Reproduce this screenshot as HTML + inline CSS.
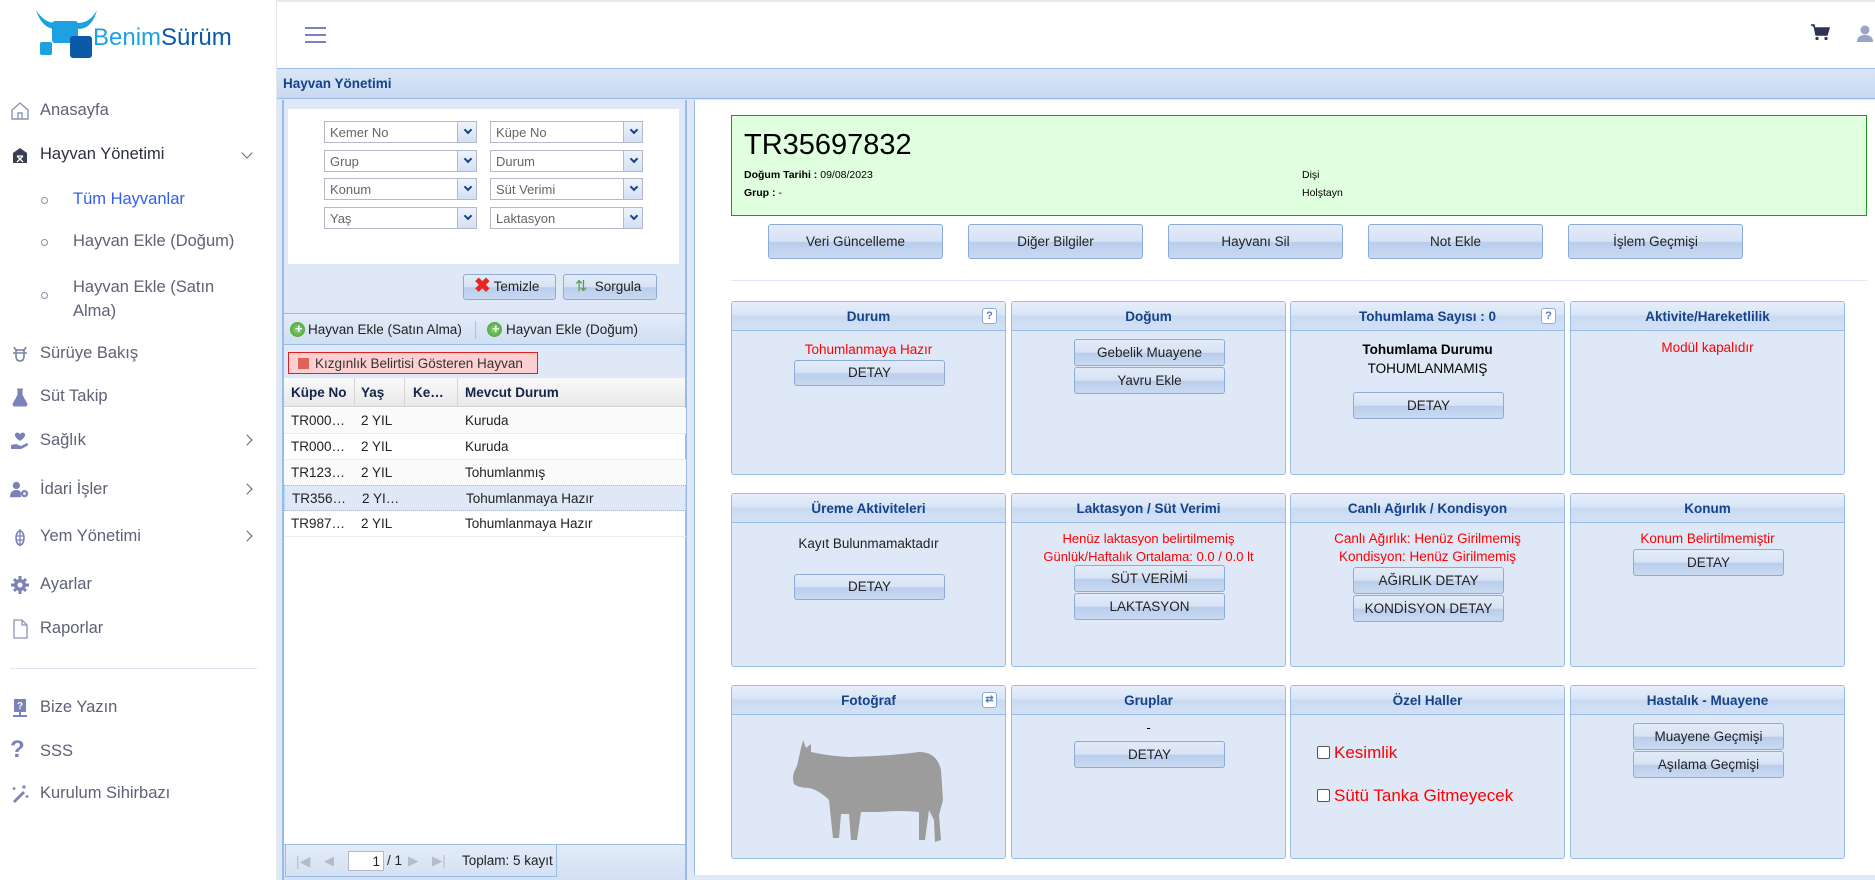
<!DOCTYPE html>
<html><head><meta charset="utf-8">
<style>
*{box-sizing:border-box;margin:0;padding:0}
body{width:1875px;height:880px;overflow:hidden;background:#fff;font-family:"Liberation Sans",Arial,sans-serif;position:relative;font-size:13px;color:#000}
.a{position:absolute}
#side{left:0;top:0;width:277px;height:880px;background:#fff;border-right:1px solid #e4e7ee}
.mi{position:absolute;left:40px;font-size:16.5px;color:#5d6276;white-space:nowrap}
.ic{position:absolute;left:10px;width:20px;height:20px}
.sub{position:absolute;left:73px;font-size:16.5px;color:#5d6276}
.bul{position:absolute;left:41px;width:7px;height:7px;border:1px solid #8a8fa8;border-radius:50%}
.chev{position:absolute;left:243px;width:8px;height:8px;border-right:1.6px solid #5d6276;border-bottom:1.6px solid #5d6276;transform:rotate(-45deg)}
.sel{position:absolute;height:22px;width:153px;border:1px solid #b5b8c8;background:#fff;font-size:13px;color:#666;padding:3px 5px}
.sel:after{content:"";position:absolute;right:0;top:0;width:18px;height:20px;background:linear-gradient(#eef3fb,#d3e0f3);border-left:1px solid #b5b8c8}
.sel i{position:absolute;right:5px;top:5px;width:6px;height:6px;border-right:2px solid #15428b;border-bottom:2px solid #15428b;transform:rotate(45deg);z-index:2}
.btn{position:absolute;border:1px solid #8eaad8;border-radius:3px;background:linear-gradient(#e3ebf8 0%,#d6e2f5 50%,#b9cdec 52%,#c9d9f1 100%);text-align:center;font-size:13.5px;color:#222;white-space:nowrap}
.card{position:absolute;width:275px;height:174px;border:1px solid #99bbe8;border-radius:3px;background:#dfe8f6}
.ch{height:29px;border-bottom:1px solid #99bbe8;background:linear-gradient(#e6eefa 0%,#d9e5f6 45%,#c8daf2 50%,#d3e1f5 100%);text-align:center;font-weight:bold;font-size:13.5px;color:#15428b;line-height:29px}
.q{position:absolute;right:8px;top:6px;width:15px;height:16px;border:1px solid #8eaad8;border-radius:3px;background:#fff;color:#5b7fb9;font-size:11px;line-height:14px;text-align:center;font-weight:bold}
.red{color:#ff0000;font-size:13.5px;text-align:center;position:absolute;left:0;right:0}
.row{position:absolute;left:0;width:402px;height:26px;font-size:13.5px;color:#222;border-bottom:1px solid #ededed}
.row span{position:absolute;top:5px}
</style></head><body>
<div id="side" class="a">
 <svg class="a" style="left:34px;top:7px" width="200" height="55" viewBox="0 0 200 55">
  <path d="M2 3 Q10 16 22 16 L44 16 Q56 16 63 3 Q58 22 44 22 L22 22 Q8 22 2 3Z" fill="#1ea1e0"/>
  <rect x="18" y="14" width="26" height="22" rx="3" fill="#1ea1e0"/>
  <rect x="6" y="35" width="12" height="13" rx="2" fill="#1ea1e0"/>
  <rect x="36" y="29" width="22" height="22" rx="3" fill="#0b5aa8"/>
  <text x="59" y="38" font-family="Liberation Sans,sans-serif" font-size="24" fill="#1ea1e0">Benim<tspan fill="#0b5aa8">Sürüm</tspan></text>
 </svg>
 <svg class="ic" style="top:101px" viewBox="0 0 20 20"><path d="M2 9 L10 2 L18 9 V18 H2Z M8 18 V12 H12 V18" fill="none" stroke="#8a93b8" stroke-width="1.4"/></svg>
 <div class="mi" style="top:101px">Anasayfa</div>
 <svg class="ic" style="top:145px" viewBox="0 0 20 20"><path d="M3 8 L10 3 L17 8 V18 H3Z" fill="#3a3f55"/><path d="M7 11 H13 M7 11 L13 17 M13 11 L7 17" stroke="#fff" stroke-width="1.3"/></svg>
 <div class="mi" style="top:145px;color:#2b2f40">Hayvan Yönetimi</div>
 <div class="chev" style="top:149px;transform:rotate(45deg)"></div>
 <div class="bul" style="top:197px"></div><div class="sub" style="top:190px;color:#2f5ef0">Tüm Hayvanlar</div>
 <div class="bul" style="top:239px"></div><div class="sub" style="top:232px">Hayvan Ekle (Doğum)</div>
 <div class="bul" style="top:292px"></div><div class="sub" style="top:275px;line-height:24px">Hayvan Ekle (Satın<br>Alma)</div>
 <svg class="ic" style="top:344px" viewBox="0 0 20 20"><path d="M4 3 Q6 7 8 6 M16 3 Q14 7 12 6 M6 6 H14 V12 Q14 17 10 17 Q6 17 6 12Z M3 9 H17" fill="none" stroke="#7a82a8" stroke-width="1.6"/></svg>
 <div class="mi" style="top:344px">Sürüye Bakış</div>
 <svg class="ic" style="top:387px" viewBox="0 0 20 20"><path d="M7 2 H13 M8 2 V8 L3 17 Q3 19 5 19 H15 Q17 19 17 17 L12 8 V2" fill="#7a82b8" stroke="#7a82b8"/></svg>
 <div class="mi" style="top:387px">Süt Takip</div>
 <svg class="ic" style="top:431px" viewBox="0 0 20 20"><path d="M10 3 Q13 0 15 3 Q16 6 10 10 Q4 6 5 3 Q7 0 10 3Z M1 14 L6 13 L11 15 L17 12 Q19 13 17 15 L11 18 H1Z" fill="#7a82b8"/></svg>
 <div class="mi" style="top:431px">Sağlık</div><div class="chev" style="top:436px"></div>
 <svg class="ic" style="top:480px" viewBox="0 0 22 20"><circle cx="7" cy="5" r="4" fill="#7a82b8"/><path d="M0 18 Q0 10 7 10 Q11 10 12 13 V18Z" fill="#7a82b8"/><circle cx="16" cy="14" r="4" fill="#7a82b8"/><circle cx="16" cy="14" r="1.5" fill="#fff"/></svg>
 <div class="mi" style="top:480px">İdari İşler</div><div class="chev" style="top:485px"></div>
 <svg class="ic" style="top:527px" viewBox="0 0 20 20"><ellipse cx="10" cy="11" rx="4" ry="7" fill="none" stroke="#7a82b8" stroke-width="1.6"/><path d="M10 2 V19 M6 9 H14 M6 13 H14" stroke="#7a82b8" stroke-width="1.3"/></svg>
 <div class="mi" style="top:527px">Yem Yönetimi</div><div class="chev" style="top:532px"></div>
 <svg class="ic" style="top:575px" viewBox="0 0 20 20"><circle cx="10" cy="10" r="6" fill="#7a82b8"/><path d="M10 1 V19 M1 10 H19 M4 4 L16 16 M16 4 L4 16" stroke="#7a82b8" stroke-width="3"/><circle cx="10" cy="10" r="2.5" fill="#fff"/></svg>
 <div class="mi" style="top:575px">Ayarlar</div>
 <svg class="ic" style="top:619px" viewBox="0 0 20 20"><path d="M4 1 H12 L17 6 V19 H4Z M12 1 V6 H17" fill="none" stroke="#8a93b8" stroke-width="1.3"/></svg>
 <div class="mi" style="top:619px">Raporlar</div>
 <div class="a" style="left:10px;top:668px;width:247px;height:1px;background:#e2e5ef"></div>
 <svg class="ic" style="top:698px" viewBox="0 0 20 20"><rect x="4" y="1" width="12" height="13" fill="#7a82b8"/><path d="M10 14 V18 M3 18 H17" stroke="#7a82b8" stroke-width="2"/><text x="10" y="11" font-size="10" fill="#fff" text-anchor="middle" font-weight="bold">?</text></svg>
 <div class="mi" style="top:698px">Bize Yazın</div>
 <div class="a" style="left:10px;top:736px;font-size:24px;font-weight:bold;color:#7a82b8">?</div>
 <div class="mi" style="top:742px">SSS</div>
 <svg class="ic" style="top:784px" viewBox="0 0 20 20"><path d="M3 17 L13 7 L15 9 L5 19Z" fill="#7a82b8"/><path d="M14 1 V5 M12 3 H16 M4 3 V6 M2.5 4.5 H5.5 M17 11 V14 M15.5 12.5 H18.5" stroke="#7a82b8" stroke-width="1.3"/></svg>
 <div class="mi" style="top:784px">Kurulum Sihirbazı</div>
</div>
<!-- top bar -->
<div class="a" style="left:277px;top:0;width:1598px;height:2px;background:#e8e8e8"></div>
<div class="a" style="left:305px;top:27px;width:21px;height:2px;background:#7a82b8;box-shadow:0 7px 0 #7a82b8,0 14px 0 #7a82b8"></div>
<svg class="a" style="left:1811px;top:24px" width="19" height="17" viewBox="0 0 19 17"><path d="M0 1 H3 L5 11 H16 L18 4 H4" fill="#2c3553" stroke="#2c3553" stroke-width="1.5"/><circle cx="6" cy="14.5" r="1.6" fill="#2c3553"/><circle cx="15" cy="14.5" r="1.6" fill="#2c3553"/></svg>
<svg class="a" style="left:1857px;top:25px" width="16" height="17" viewBox="0 0 16 17"><circle cx="8" cy="5" r="4.5" fill="#9aa3c8"/><path d="M0 17 Q0 10 8 10 Q16 10 16 17Z" fill="#9aa3c8"/></svg>
<!-- main header -->
<div class="a" style="left:277px;top:68px;width:1598px;height:812px;background:#dfe8f6"></div>
<div class="a" style="left:277px;top:68px;width:1598px;height:31px;background:linear-gradient(#dae6f6,#c7d9f1);border-top:1px solid #99bbe8;border-bottom:1px solid #99bbe8;font-weight:bold;font-size:13.5px;color:#15428b;padding:7px 0 0 6px">Hayvan Yönetimi</div>
<!-- left panel -->
<div class="a" style="left:282px;top:100px;width:405px;height:780px;border:1px solid #99bbe8;border-width:0 2px 0 2px;background:#dfe8f6"></div>
<div class="a" style="left:288px;top:109px;width:391px;height:155px;background:#fff"></div>
<div class="sel" style="left:324px;top:121px">Kemer No<i></i></div>
<div class="sel" style="left:490px;top:121px">Küpe No<i></i></div>
<div class="sel" style="left:324px;top:150px">Grup<i></i></div>
<div class="sel" style="left:490px;top:150px">Durum<i></i></div>
<div class="sel" style="left:324px;top:178px">Konum<i></i></div>
<div class="sel" style="left:490px;top:178px">Süt Verimi<i></i></div>
<div class="sel" style="left:324px;top:207px">Yaş<i></i></div>
<div class="sel" style="left:490px;top:207px">Laktasyon<i></i></div>
<div class="btn" style="left:463px;top:274px;width:93px;height:26px;line-height:24px;padding-left:14px"><span style="position:absolute;left:10px;top:-1px;color:#e8261f;font-size:20px;font-weight:bold">✖</span>Temizle</div>
<div class="btn" style="left:563px;top:274px;width:94px;height:26px;line-height:24px;padding-left:16px"><span style="position:absolute;left:11px;top:0;color:#4aa63a;font-size:15px">⇅</span>Sorgula</div>
<div class="a" style="left:284px;top:313px;width:401px;height:32px;background:linear-gradient(#e3ecf8,#d0def2);border-top:1px solid #99bbe8;border-bottom:1px solid #99bbe8;font-size:13.5px;color:#222">
 <span class="a" style="left:6px;top:8px;width:15px;height:15px;border-radius:50%;background:radial-gradient(#8fd37a,#3b9a2d)"></span><span class="a" style="left:11px;top:7px;color:#fff;font-weight:bold;font-size:13px">+</span>
 <span class="a" style="left:24px;top:8px">Hayvan Ekle (Satın Alma)</span>
 <span class="a" style="left:191px;top:7px;width:1px;height:18px;background:#a8bfdf"></span>
 <span class="a" style="left:203px;top:8px;width:15px;height:15px;border-radius:50%;background:radial-gradient(#8fd37a,#3b9a2d)"></span><span class="a" style="left:208px;top:7px;color:#fff;font-weight:bold;font-size:13px">+</span>
 <span class="a" style="left:222px;top:8px">Hayvan Ekle (Doğum)</span>
</div>
<div class="a" style="left:288px;top:352px;width:250px;height:22px;background:#fcd0d0;border:1.5px solid #e02020;font-size:13.5px;color:#333;padding:3px 0 0 26px"><span class="a" style="left:9px;top:5px;width:11px;height:11px;background:#e0605a"></span>Kızgınlık Belirtisi Gösteren Hayvan</div>
<div class="a" style="left:284px;top:378px;width:401px;height:466px;background:#fff">
 <div class="a" style="left:0;top:0;width:401px;height:29px;background:linear-gradient(#f9f9f9,#e9e9e9);border-bottom:1px solid #d0d0d0;font-weight:bold;font-size:13.5px;color:#15224a">
  <span class="a" style="left:7px;top:7px">Küpe No</span><span class="a" style="left:70px;top:0;width:1px;height:29px;background:#d5d5d5"></span>
  <span class="a" style="left:77px;top:7px">Yaş</span><span class="a" style="left:120px;top:0;width:1px;height:29px;background:#d5d5d5"></span>
  <span class="a" style="left:129px;top:7px">Ke…</span><span class="a" style="left:173px;top:0;width:1px;height:29px;background:#d5d5d5"></span>
  <span class="a" style="left:181px;top:7px">Mevcut Durum</span>
 </div>
 <div class="row" style="top:30px;background:#fafafa"><span style="left:7px">TR000…</span><span style="left:77px">2 YIL</span><span style="left:181px">Kuruda</span></div>
 <div class="row" style="top:56px"><span style="left:7px">TR000…</span><span style="left:77px">2 YIL</span><span style="left:181px">Kuruda</span></div>
 <div class="row" style="top:82px;background:#fafafa"><span style="left:7px">TR123…</span><span style="left:77px">2 YIL</span><span style="left:181px">Tohumlanmış</span></div>
 <div class="row" style="top:107px;background:#dfe8f6;border:1px dotted #99bbe8"><span style="left:7px">TR356…</span><span style="left:77px">2 YI…</span><span style="left:181px">Tohumlanmaya Hazır</span></div>
 <div class="row" style="top:133px"><span style="left:7px">TR987…</span><span style="left:77px">2 YIL</span><span style="left:181px">Tohumlanmaya Hazır</span></div>
</div>
<div class="a" style="left:284px;top:844px;width:401px;height:36px;background:linear-gradient(#e3ecf8,#d2e0f3);border-top:1px solid #99bbe8"></div>
<div class="a" style="left:285px;top:844px;width:272px;height:33px;border:1px solid #99bbe8;font-size:13.5px;color:#222">
 <span class="a" style="left:10px;top:8px;color:#b5bcc8;font-size:14px">|◀</span>
 <span class="a" style="left:38px;top:8px;color:#b5bcc8;font-size:13px">◀</span>
 <span class="a" style="left:62px;top:6px;width:36px;height:20px;border:1px solid #b5b8c8;background:#fff;text-align:right;padding:2px 3px 0 0">1</span>
 <span class="a" style="left:101px;top:8px">/ 1</span>
 <span class="a" style="left:122px;top:8px;color:#b5bcc8">▶</span>
 <span class="a" style="left:146px;top:8px;color:#b5bcc8">▶|</span>
 <span class="a" style="left:176px;top:8px">Toplam: 5 kayıt</span>
</div>
<!-- right panel -->
<div class="a" style="left:694px;top:100px;width:1181px;height:775px;background:#fff;border-left:1px solid #99bbe8"></div>
<div class="a" style="left:731px;top:115px;width:1136px;height:101px;background:#dfffdf;border:1.5px solid #1d9a1d">
 <div class="a" style="left:12px;top:13px;font-size:29px;color:#000">TR35697832</div>
 <div class="a" style="left:12px;top:53px;font-size:10.5px"><b>Doğum Tarihi :</b> 09/08/2023</div>
 <div class="a" style="left:12px;top:71px;font-size:10.5px"><b>Grup :</b> -</div>
 <div class="a" style="left:570px;top:53px;font-size:10.5px">Dişi</div>
 <div class="a" style="left:570px;top:71px;font-size:10.5px">Holştayn</div>
</div>
<div class="btn" style="left:768px;top:224px;width:175px;height:35px;line-height:33px">Veri Güncelleme</div>
<div class="btn" style="left:968px;top:224px;width:175px;height:35px;line-height:33px">Diğer Bilgiler</div>
<div class="btn" style="left:1168px;top:224px;width:175px;height:35px;line-height:33px">Hayvanı Sil</div>
<div class="btn" style="left:1368px;top:224px;width:175px;height:35px;line-height:33px">Not Ekle</div>
<div class="btn" style="left:1568px;top:224px;width:175px;height:35px;line-height:33px">İşlem Geçmişi</div>
<div class="a" style="left:731px;top:280px;width:1136px;height:1px;background:#dfe8f6"></div>
<!-- row 1 -->
<div class="card" style="left:731px;top:301px"><div class="ch">Durum</div><div class="q">?</div>
 <div class="red" style="top:40px">Tohumlanmaya Hazır</div>
 <div class="btn" style="left:62px;top:58px;width:151px;height:26px;line-height:24px">DETAY</div></div>
<div class="card" style="left:1011px;top:301px"><div class="ch">Doğum</div>
 <div class="btn" style="left:62px;top:37px;width:151px;height:27px;line-height:25px">Gebelik Muayene</div>
 <div class="btn" style="left:62px;top:65px;width:151px;height:27px;line-height:25px">Yavru Ekle</div></div>
<div class="card" style="left:1290px;top:301px"><div class="ch">Tohumlama Sayısı : 0</div><div class="q">?</div>
 <div class="a" style="left:0;right:0;top:38px;text-align:center;font-size:13.5px;line-height:19px"><b>Tohumlama Durumu</b><br>TOHUMLANMAMIŞ</div>
 <div class="btn" style="left:62px;top:90px;width:151px;height:27px;line-height:25px">DETAY</div></div>
<div class="card" style="left:1570px;top:301px"><div class="ch">Aktivite/Hareketlilik</div>
 <div class="red" style="top:38px">Modül kapalıdır</div></div>
<!-- row 2 -->
<div class="card" style="left:731px;top:493px"><div class="ch">Üreme Aktiviteleri</div>
 <div class="a" style="left:0;right:0;top:42px;text-align:center;font-size:13.5px;color:#222">Kayıt Bulunmamaktadır</div>
 <div class="btn" style="left:62px;top:80px;width:151px;height:26px;line-height:24px">DETAY</div></div>
<div class="card" style="left:1011px;top:493px"><div class="ch">Laktasyon / Süt Verimi</div>
 <div class="red" style="top:36px;line-height:18px;font-size:13px">Henüz laktasyon belirtilmemiş<br>Günlük/Haftalık Ortalama: 0.0 / 0.0 lt</div>
 <div class="btn" style="left:62px;top:71px;width:151px;height:27px;line-height:25px">SÜT VERİMİ</div>
 <div class="btn" style="left:62px;top:99px;width:151px;height:27px;line-height:25px">LAKTASYON</div></div>
<div class="card" style="left:1290px;top:493px"><div class="ch">Canlı Ağırlık / Kondisyon</div>
 <div class="red" style="top:36px;line-height:18px">Canlı Ağırlık: Henüz Girilmemiş<br>Kondisyon: Henüz Girilmemiş</div>
 <div class="btn" style="left:62px;top:73px;width:151px;height:27px;line-height:25px">AĞIRLIK DETAY</div>
 <div class="btn" style="left:62px;top:101px;width:151px;height:27px;line-height:25px">KONDİSYON DETAY</div></div>
<div class="card" style="left:1570px;top:493px"><div class="ch">Konum</div>
 <div class="red" style="top:37px">Konum Belirtilmemiştir</div>
 <div class="btn" style="left:62px;top:55px;width:151px;height:27px;line-height:25px">DETAY</div></div>
<!-- row 3 -->
<div class="card" style="left:731px;top:685px"><div class="ch">Fotoğraf</div><div class="q" style="font-size:10px">⇄</div>
 <svg class="a" style="left:57px;top:54px" width="158" height="110" viewBox="0 0 158 110"><path d="M12 8 L14 0 L17 8 L22 4 L22 12 Q40 16 60 17 Q100 16 130 12 Q148 12 152 30 L154 60 L150 75 L152 100 L146 102 L145 80 L140 70 L136 100 L130 100 L130 72 Q110 70 90 72 L72 72 L68 100 L62 100 L60 74 L52 74 L50 98 L44 98 L40 60 Q30 50 20 48 Q10 48 5 44 Q2 36 8 26Z" fill="#9c9c9c"/></svg></div>
<div class="card" style="left:1011px;top:685px"><div class="ch">Gruplar</div>
 <div class="a" style="left:0;right:0;top:34px;text-align:center;font-size:13px">-</div>
 <div class="btn" style="left:62px;top:55px;width:151px;height:27px;line-height:25px">DETAY</div></div>
<div class="card" style="left:1290px;top:685px"><div class="ch">Özel Haller</div>
 <div class="a" style="left:26px;top:60px;width:13px;height:13px;border:1px solid #555;border-radius:2px;background:#fff"></div>
 <div class="a" style="left:43px;top:57px;font-size:17px;color:#ff0000">Kesimlik</div>
 <div class="a" style="left:26px;top:103px;width:13px;height:13px;border:1px solid #555;border-radius:2px;background:#fff"></div>
 <div class="a" style="left:43px;top:100px;font-size:17px;color:#ff0000">Sütü Tanka Gitmeyecek</div></div>
<div class="card" style="left:1570px;top:685px"><div class="ch">Hastalık - Muayene</div>
 <div class="btn" style="left:62px;top:37px;width:151px;height:27px;line-height:25px">Muayene Geçmişi</div>
 <div class="btn" style="left:62px;top:65px;width:151px;height:27px;line-height:25px">Aşılama Geçmişi</div></div>
<div class="a" style="left:694px;top:875px;width:1181px;height:5px;background:#dfe8f6"></div>
</body></html>
